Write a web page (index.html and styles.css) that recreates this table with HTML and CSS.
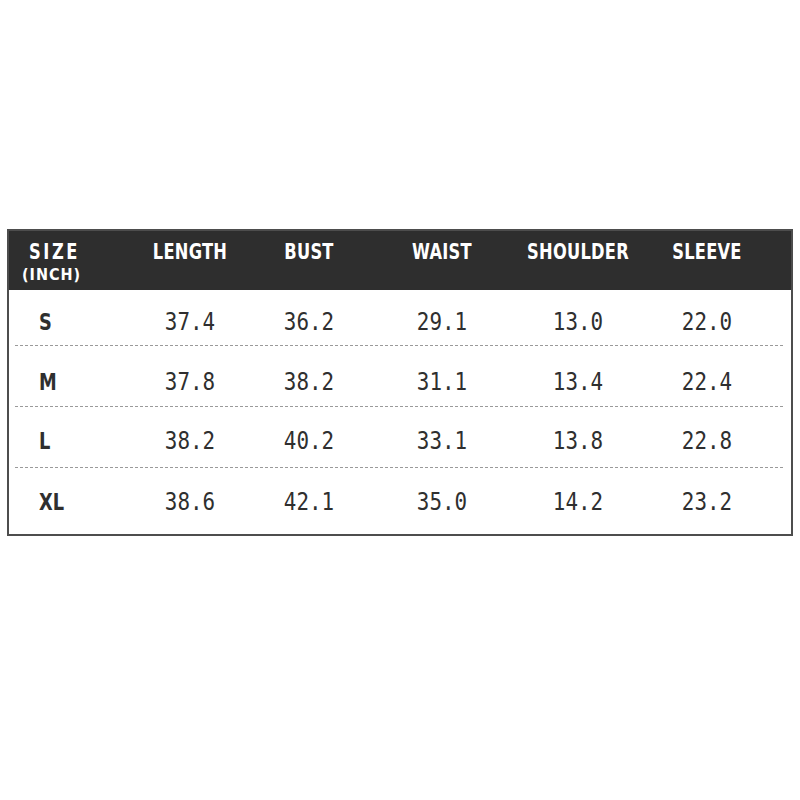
FILE: index.html
```html
<!DOCTYPE html>
<html>
<head>
<meta charset="utf-8">
<link rel="stylesheet" href="styles.css">
</head>
<body>
<div class="chart">
  <div class="row head">
    <div class="cell first"><span class="size">SIZE</span><span class="unit">(INCH)</span></div>
    <div class="cell label">LENGTH</div>
    <div class="cell label">BUST</div>
    <div class="cell label">WAIST</div>
    <div class="cell label">SHOULDER</div>
    <div class="cell label">SLEEVE</div>
  </div>
  <div class="row data r1">
    <div class="cell first">S</div>
    <div class="cell num">37.4</div>
    <div class="cell num">36.2</div>
    <div class="cell num">29.1</div>
    <div class="cell num">13.0</div>
    <div class="cell num">22.0</div>
  </div>
  <div class="row data r2">
    <div class="cell first">M</div>
    <div class="cell num">37.8</div>
    <div class="cell num">38.2</div>
    <div class="cell num">31.1</div>
    <div class="cell num">13.4</div>
    <div class="cell num">22.4</div>
  </div>
  <div class="row data r3">
    <div class="cell first">L</div>
    <div class="cell num">38.2</div>
    <div class="cell num">40.2</div>
    <div class="cell num">33.1</div>
    <div class="cell num">13.8</div>
    <div class="cell num">22.8</div>
  </div>
  <div class="row data r4">
    <div class="cell first">XL</div>
    <div class="cell num">38.6</div>
    <div class="cell num">42.1</div>
    <div class="cell num">35.0</div>
    <div class="cell num">14.2</div>
    <div class="cell num">23.2</div>
  </div>
</div>
</body>
</html>
```

FILE: styles.css
```css
html, body {
  margin: 0;
  padding: 0;
  background: #ffffff;
}
body {
  width: 800px;
  height: 800px;
  padding-top: 229px;
  box-sizing: border-box;
}
.chart {
  margin-left: 7px;
  width: 786px;
  box-sizing: border-box;
  border: 2px solid #4d4d4d;
  font-family: "DejaVu Sans Condensed", "Liberation Sans", sans-serif;
}
.row {
  display: grid;
  grid-template-columns: 121px 120px 118px 148px 124px 134px 1fr;
}
.head {
  height: 59px;
  background: #2e2e2e;
  color: #ffffff;
  font-weight: bold;
  font-size: 21px;
  line-height: 21px;
}
.head .label {
  text-align: center;
  padding-top: 11px;
  letter-spacing: 0.3px;
  transform: scaleX(0.86);
}
.head .first {
  text-align: left;
  padding-left: 18px;
  padding-top: 11px;
  display: flex;
  flex-direction: column;
  align-items: flex-start;
}
.size {
  letter-spacing: 3px;
  transform: scaleX(0.86);
  transform-origin: left center;
  margin-left: 2px;
}
.unit {
  font-size: 16px;
  line-height: 18px;
  margin-top: 3px;
  margin-left: -5px;
  letter-spacing: 1px;
}
.data {
  color: #2f2f2f;
  background-image: repeating-linear-gradient(to right, #9a9a9a 0 3px, transparent 3px 5px);
  background-size: calc(100% - 14px) 1px;
  background-position: 6px 100%;
  background-repeat: no-repeat;
  align-items: center;
}
.data.r4 {
  background-image: none;
}
.r1 { height: 56px; padding-top: 8px; box-sizing: border-box; }
.r2 { height: 61px; padding-top: 10px; box-sizing: border-box; }
.r3 { height: 61px; padding-top: 7px; box-sizing: border-box; }
.r4 { height: 66px; padding-top: 2px; box-sizing: border-box; }
.data .cell {
  text-align: center;
  font-size: 24px;
  line-height: 22px;
}
.data .first {
  text-align: left;
  padding-left: 35px;
  font-weight: bold;
  font-size: 23px;
  transform: scaleX(0.86);
  transform-origin: left center;
}
.num {
  font-family: "DejaVu Sans Mono", "Liberation Mono", monospace;
  transform: scaleX(0.87);
}
```
